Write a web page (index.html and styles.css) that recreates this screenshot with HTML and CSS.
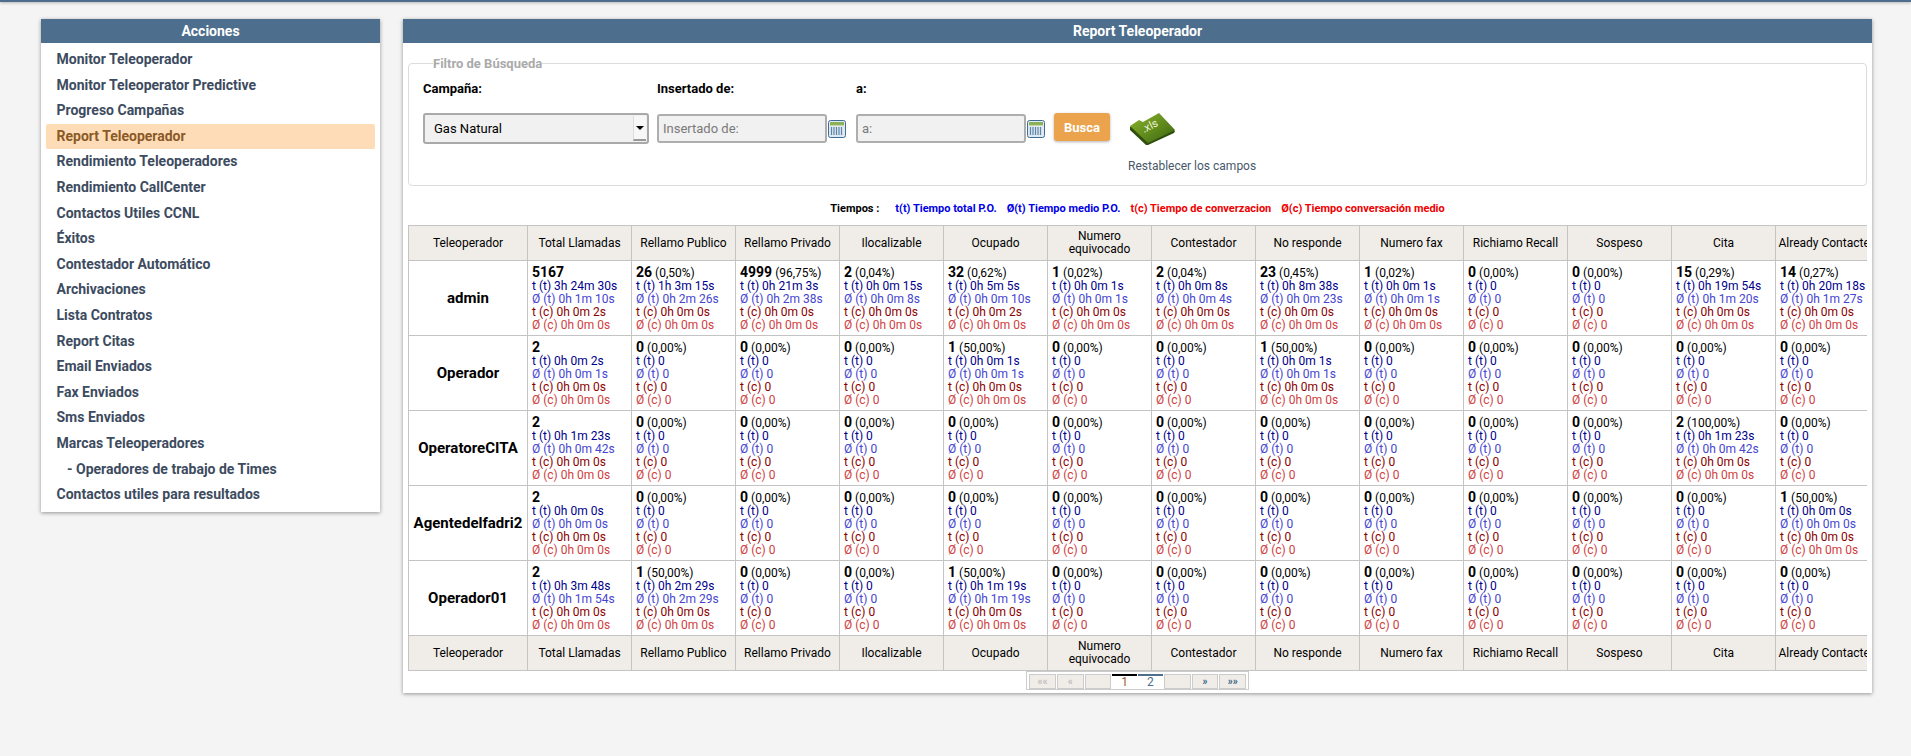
FILE: index.html
```html
<!DOCTYPE html>
<html lang="es">
<head>
<meta charset="utf-8">
<title>Report Teleoperador</title>
<link rel="stylesheet" href="styles.css">
</head>
<body>
<div class="topbar"></div>
<div class="layout">
  <aside class="panel side">
    <h2 class="panel-title">Acciones</h2>
    <ul class="menu">
      <li><a>Monitor Teleoperador</a></li>
      <li><a>Monitor Teleoperator Predictive</a></li>
      <li><a>Progreso Campañas</a></li>
      <li class="active"><a>Report Teleoperador</a></li>
      <li><a>Rendimiento Teleoperadores</a></li>
      <li><a>Rendimiento CallCenter</a></li>
      <li><a>Contactos Utiles CCNL</a></li>
      <li><a>Éxitos</a></li>
      <li><a>Contestador Automático</a></li>
      <li><a>Archivaciones</a></li>
      <li><a>Lista Contratos</a></li>
      <li><a>Report Citas</a></li>
      <li><a>Email Enviados</a></li>
      <li><a>Fax Enviados</a></li>
      <li><a>Sms Enviados</a></li>
      <li><a>Marcas Teleoperadores</a></li>
      <li class="sub"><a>- Operadores de trabajo de Times</a></li>
      <li><a>Contactos utiles para resultados</a></li>
    </ul>
  </aside>
  <main class="panel report">
    <h2 class="panel-title">Report Teleoperador</h2>
    <div class="report-body">
      <fieldset class="filter">
        <legend>Filtro de Búsqueda</legend>
        <div class="filter-grid">
          <label class="flabel">Campaña:</label>
          <label class="flabel">Insertado de:</label>
          <label class="flabel">a:</label>
          <span></span><span></span>
          <div class="select-wrap">
            <select class="campaign"><option>Gas Natural</option></select>
            <span class="select-arrow"></span>
          </div>
          <div class="date-field">
            <input class="date" placeholder="Insertado de:">
            <svg class="cal" viewBox="0 0 18 18"><rect x=".5" y=".5" width="17" height="17" rx="2" fill="#dfe9f2" stroke="#3f6d94"/><rect x="2" y="2" width="14" height="3" fill="#8db05a"/><rect x="2" y="5" width="14" height="1" fill="#c9d9a8"/><path d="M3.5 7v8M6 7v8M8.500 7v8M11 7v8M13.500 7v8" stroke="#5f86a8" stroke-width="1.200"/></svg>
          </div>
          <div class="date-field">
            <input class="date" placeholder="a:">
            <svg class="cal" viewBox="0 0 18 18"><rect x=".5" y=".5" width="17" height="17" rx="2" fill="#dfe9f2" stroke="#3f6d94"/><rect x="2" y="2" width="14" height="3" fill="#8db05a"/><rect x="2" y="5" width="14" height="1" fill="#c9d9a8"/><path d="M3.5 7v8M6 7v8M8.500 7v8M11 7v8M13.500 7v8" stroke="#5f86a8" stroke-width="1.200"/></svg>
          </div>
          <button class="search">Busca</button>
          <svg class="xls" viewBox="0 0 48 34">
            <defs><linearGradient id="xg" x1="0" y1="0" x2="1" y2="1"><stop offset="0" stop-color="#8fb531"/><stop offset=".55" stop-color="#5f8a1c"/><stop offset="1" stop-color="#39600f"/></linearGradient></defs>
            <path d="M2 15 L11 9 L15 11 L31 2 L47 19 L46 21 L20 33 L18 33 L2 18 Z" fill="#2f4f0c"/>
            <path d="M2 14 L11 8 L15 10 L31 1 L47 18 L20 31 Z" fill="url(#xg)"/>
            <text class="xls-text" x="16" y="21" transform="rotate(-27 16 21)">.xls</text>
          </svg>
          <a class="reset">Restablecer los campos</a>
        </div>
      </fieldset>
      <p class="legend-line"><b class="k">Tiempos :</b><b class="bl">t(t) Tiempo total P.O.</b><b class="bl">Ø(t) Tiempo medio P.O.</b><b class="rd">t(c) Tiempo de converzacion</b><b class="rd">Ø(c) Tiempo conversación medio</b></p>
      <div class="table-clip">
        <table class="stats">
          <colgroup><col class="c-name"><col span="13" class="c-num"></colgroup>
          <thead>
            <tr><th>Teleoperador</th><th>Total Llamadas</th><th>Rellamo Publico</th><th>Rellamo Privado</th><th>Ilocalizable</th><th>Ocupado</th><th>Numero equivocado</th><th>Contestador</th><th>No responde</th><th>Numero fax</th><th>Richiamo Recall</th><th>Sospeso</th><th>Cita</th><th>Already Contacted</th></tr>
          </thead>
          <tbody>
            <tr>
              <td class="name">admin</td>
              <td class="total"><b>5167</b><i class="tt">t (t) 3h 24m 30s</i><i class="mt">Ø (t) 0h 1m 10s</i><i class="tc">t (c) 0h 0m 2s</i><i class="mc">Ø (c) 0h 0m 0s</i></td>
              <td><b>26</b> <small>(0,50%)</small><i class="tt">t (t) 1h 3m 15s</i><i class="mt">Ø (t) 0h 2m 26s</i><i class="tc">t (c) 0h 0m 0s</i><i class="mc">Ø (c) 0h 0m 0s</i></td>
              <td><b>4999</b> <small>(96,75%)</small><i class="tt">t (t) 0h 21m 3s</i><i class="mt">Ø (t) 0h 2m 38s</i><i class="tc">t (c) 0h 0m 0s</i><i class="mc">Ø (c) 0h 0m 0s</i></td>
              <td><b>2</b> <small>(0,04%)</small><i class="tt">t (t) 0h 0m 15s</i><i class="mt">Ø (t) 0h 0m 8s</i><i class="tc">t (c) 0h 0m 0s</i><i class="mc">Ø (c) 0h 0m 0s</i></td>
              <td><b>32</b> <small>(0,62%)</small><i class="tt">t (t) 0h 5m 5s</i><i class="mt">Ø (t) 0h 0m 10s</i><i class="tc">t (c) 0h 0m 2s</i><i class="mc">Ø (c) 0h 0m 0s</i></td>
              <td><b>1</b> <small>(0,02%)</small><i class="tt">t (t) 0h 0m 1s</i><i class="mt">Ø (t) 0h 0m 1s</i><i class="tc">t (c) 0h 0m 0s</i><i class="mc">Ø (c) 0h 0m 0s</i></td>
              <td><b>2</b> <small>(0,04%)</small><i class="tt">t (t) 0h 0m 8s</i><i class="mt">Ø (t) 0h 0m 4s</i><i class="tc">t (c) 0h 0m 0s</i><i class="mc">Ø (c) 0h 0m 0s</i></td>
              <td><b>23</b> <small>(0,45%)</small><i class="tt">t (t) 0h 8m 38s</i><i class="mt">Ø (t) 0h 0m 23s</i><i class="tc">t (c) 0h 0m 0s</i><i class="mc">Ø (c) 0h 0m 0s</i></td>
              <td><b>1</b> <small>(0,02%)</small><i class="tt">t (t) 0h 0m 1s</i><i class="mt">Ø (t) 0h 0m 1s</i><i class="tc">t (c) 0h 0m 0s</i><i class="mc">Ø (c) 0h 0m 0s</i></td>
              <td><b>0</b> <small>(0,00%)</small><i class="tt">t (t) 0</i><i class="mt">Ø (t) 0</i><i class="tc">t (c) 0</i><i class="mc">Ø (c) 0</i></td>
              <td><b>0</b> <small>(0,00%)</small><i class="tt">t (t) 0</i><i class="mt">Ø (t) 0</i><i class="tc">t (c) 0</i><i class="mc">Ø (c) 0</i></td>
              <td><b>15</b> <small>(0,29%)</small><i class="tt">t (t) 0h 19m 54s</i><i class="mt">Ø (t) 0h 1m 20s</i><i class="tc">t (c) 0h 0m 0s</i><i class="mc">Ø (c) 0h 0m 0s</i></td>
              <td><b>14</b> <small>(0,27%)</small><i class="tt">t (t) 0h 20m 18s</i><i class="mt">Ø (t) 0h 1m 27s</i><i class="tc">t (c) 0h 0m 0s</i><i class="mc">Ø (c) 0h 0m 0s</i></td>
            </tr>
            <tr>
              <td class="name">Operador</td>
              <td class="total"><b>2</b><i class="tt">t (t) 0h 0m 2s</i><i class="mt">Ø (t) 0h 0m 1s</i><i class="tc">t (c) 0h 0m 0s</i><i class="mc">Ø (c) 0h 0m 0s</i></td>
              <td><b>0</b> <small>(0,00%)</small><i class="tt">t (t) 0</i><i class="mt">Ø (t) 0</i><i class="tc">t (c) 0</i><i class="mc">Ø (c) 0</i></td>
              <td><b>0</b> <small>(0,00%)</small><i class="tt">t (t) 0</i><i class="mt">Ø (t) 0</i><i class="tc">t (c) 0</i><i class="mc">Ø (c) 0</i></td>
              <td><b>0</b> <small>(0,00%)</small><i class="tt">t (t) 0</i><i class="mt">Ø (t) 0</i><i class="tc">t (c) 0</i><i class="mc">Ø (c) 0</i></td>
              <td><b>1</b> <small>(50,00%)</small><i class="tt">t (t) 0h 0m 1s</i><i class="mt">Ø (t) 0h 0m 1s</i><i class="tc">t (c) 0h 0m 0s</i><i class="mc">Ø (c) 0h 0m 0s</i></td>
              <td><b>0</b> <small>(0,00%)</small><i class="tt">t (t) 0</i><i class="mt">Ø (t) 0</i><i class="tc">t (c) 0</i><i class="mc">Ø (c) 0</i></td>
              <td><b>0</b> <small>(0,00%)</small><i class="tt">t (t) 0</i><i class="mt">Ø (t) 0</i><i class="tc">t (c) 0</i><i class="mc">Ø (c) 0</i></td>
              <td><b>1</b> <small>(50,00%)</small><i class="tt">t (t) 0h 0m 1s</i><i class="mt">Ø (t) 0h 0m 1s</i><i class="tc">t (c) 0h 0m 0s</i><i class="mc">Ø (c) 0h 0m 0s</i></td>
              <td><b>0</b> <small>(0,00%)</small><i class="tt">t (t) 0</i><i class="mt">Ø (t) 0</i><i class="tc">t (c) 0</i><i class="mc">Ø (c) 0</i></td>
              <td><b>0</b> <small>(0,00%)</small><i class="tt">t (t) 0</i><i class="mt">Ø (t) 0</i><i class="tc">t (c) 0</i><i class="mc">Ø (c) 0</i></td>
              <td><b>0</b> <small>(0,00%)</small><i class="tt">t (t) 0</i><i class="mt">Ø (t) 0</i><i class="tc">t (c) 0</i><i class="mc">Ø (c) 0</i></td>
              <td><b>0</b> <small>(0,00%)</small><i class="tt">t (t) 0</i><i class="mt">Ø (t) 0</i><i class="tc">t (c) 0</i><i class="mc">Ø (c) 0</i></td>
              <td><b>0</b> <small>(0,00%)</small><i class="tt">t (t) 0</i><i class="mt">Ø (t) 0</i><i class="tc">t (c) 0</i><i class="mc">Ø (c) 0</i></td>
            </tr>
            <tr>
              <td class="name">OperatoreCITA</td>
              <td class="total"><b>2</b><i class="tt">t (t) 0h 1m 23s</i><i class="mt">Ø (t) 0h 0m 42s</i><i class="tc">t (c) 0h 0m 0s</i><i class="mc">Ø (c) 0h 0m 0s</i></td>
              <td><b>0</b> <small>(0,00%)</small><i class="tt">t (t) 0</i><i class="mt">Ø (t) 0</i><i class="tc">t (c) 0</i><i class="mc">Ø (c) 0</i></td>
              <td><b>0</b> <small>(0,00%)</small><i class="tt">t (t) 0</i><i class="mt">Ø (t) 0</i><i class="tc">t (c) 0</i><i class="mc">Ø (c) 0</i></td>
              <td><b>0</b> <small>(0,00%)</small><i class="tt">t (t) 0</i><i class="mt">Ø (t) 0</i><i class="tc">t (c) 0</i><i class="mc">Ø (c) 0</i></td>
              <td><b>0</b> <small>(0,00%)</small><i class="tt">t (t) 0</i><i class="mt">Ø (t) 0</i><i class="tc">t (c) 0</i><i class="mc">Ø (c) 0</i></td>
              <td><b>0</b> <small>(0,00%)</small><i class="tt">t (t) 0</i><i class="mt">Ø (t) 0</i><i class="tc">t (c) 0</i><i class="mc">Ø (c) 0</i></td>
              <td><b>0</b> <small>(0,00%)</small><i class="tt">t (t) 0</i><i class="mt">Ø (t) 0</i><i class="tc">t (c) 0</i><i class="mc">Ø (c) 0</i></td>
              <td><b>0</b> <small>(0,00%)</small><i class="tt">t (t) 0</i><i class="mt">Ø (t) 0</i><i class="tc">t (c) 0</i><i class="mc">Ø (c) 0</i></td>
              <td><b>0</b> <small>(0,00%)</small><i class="tt">t (t) 0</i><i class="mt">Ø (t) 0</i><i class="tc">t (c) 0</i><i class="mc">Ø (c) 0</i></td>
              <td><b>0</b> <small>(0,00%)</small><i class="tt">t (t) 0</i><i class="mt">Ø (t) 0</i><i class="tc">t (c) 0</i><i class="mc">Ø (c) 0</i></td>
              <td><b>0</b> <small>(0,00%)</small><i class="tt">t (t) 0</i><i class="mt">Ø (t) 0</i><i class="tc">t (c) 0</i><i class="mc">Ø (c) 0</i></td>
              <td><b>2</b> <small>(100,00%)</small><i class="tt">t (t) 0h 1m 23s</i><i class="mt">Ø (t) 0h 0m 42s</i><i class="tc">t (c) 0h 0m 0s</i><i class="mc">Ø (c) 0h 0m 0s</i></td>
              <td><b>0</b> <small>(0,00%)</small><i class="tt">t (t) 0</i><i class="mt">Ø (t) 0</i><i class="tc">t (c) 0</i><i class="mc">Ø (c) 0</i></td>
            </tr>
            <tr>
              <td class="name">Agentedelfadri2</td>
              <td class="total"><b>2</b><i class="tt">t (t) 0h 0m 0s</i><i class="mt">Ø (t) 0h 0m 0s</i><i class="tc">t (c) 0h 0m 0s</i><i class="mc">Ø (c) 0h 0m 0s</i></td>
              <td><b>0</b> <small>(0,00%)</small><i class="tt">t (t) 0</i><i class="mt">Ø (t) 0</i><i class="tc">t (c) 0</i><i class="mc">Ø (c) 0</i></td>
              <td><b>0</b> <small>(0,00%)</small><i class="tt">t (t) 0</i><i class="mt">Ø (t) 0</i><i class="tc">t (c) 0</i><i class="mc">Ø (c) 0</i></td>
              <td><b>0</b> <small>(0,00%)</small><i class="tt">t (t) 0</i><i class="mt">Ø (t) 0</i><i class="tc">t (c) 0</i><i class="mc">Ø (c) 0</i></td>
              <td><b>0</b> <small>(0,00%)</small><i class="tt">t (t) 0</i><i class="mt">Ø (t) 0</i><i class="tc">t (c) 0</i><i class="mc">Ø (c) 0</i></td>
              <td><b>0</b> <small>(0,00%)</small><i class="tt">t (t) 0</i><i class="mt">Ø (t) 0</i><i class="tc">t (c) 0</i><i class="mc">Ø (c) 0</i></td>
              <td><b>0</b> <small>(0,00%)</small><i class="tt">t (t) 0</i><i class="mt">Ø (t) 0</i><i class="tc">t (c) 0</i><i class="mc">Ø (c) 0</i></td>
              <td><b>0</b> <small>(0,00%)</small><i class="tt">t (t) 0</i><i class="mt">Ø (t) 0</i><i class="tc">t (c) 0</i><i class="mc">Ø (c) 0</i></td>
              <td><b>0</b> <small>(0,00%)</small><i class="tt">t (t) 0</i><i class="mt">Ø (t) 0</i><i class="tc">t (c) 0</i><i class="mc">Ø (c) 0</i></td>
              <td><b>0</b> <small>(0,00%)</small><i class="tt">t (t) 0</i><i class="mt">Ø (t) 0</i><i class="tc">t (c) 0</i><i class="mc">Ø (c) 0</i></td>
              <td><b>0</b> <small>(0,00%)</small><i class="tt">t (t) 0</i><i class="mt">Ø (t) 0</i><i class="tc">t (c) 0</i><i class="mc">Ø (c) 0</i></td>
              <td><b>0</b> <small>(0,00%)</small><i class="tt">t (t) 0</i><i class="mt">Ø (t) 0</i><i class="tc">t (c) 0</i><i class="mc">Ø (c) 0</i></td>
              <td><b>1</b> <small>(50,00%)</small><i class="tt">t (t) 0h 0m 0s</i><i class="mt">Ø (t) 0h 0m 0s</i><i class="tc">t (c) 0h 0m 0s</i><i class="mc">Ø (c) 0h 0m 0s</i></td>
            </tr>
            <tr>
              <td class="name">Operador01</td>
              <td class="total"><b>2</b><i class="tt">t (t) 0h 3m 48s</i><i class="mt">Ø (t) 0h 1m 54s</i><i class="tc">t (c) 0h 0m 0s</i><i class="mc">Ø (c) 0h 0m 0s</i></td>
              <td><b>1</b> <small>(50,00%)</small><i class="tt">t (t) 0h 2m 29s</i><i class="mt">Ø (t) 0h 2m 29s</i><i class="tc">t (c) 0h 0m 0s</i><i class="mc">Ø (c) 0h 0m 0s</i></td>
              <td><b>0</b> <small>(0,00%)</small><i class="tt">t (t) 0</i><i class="mt">Ø (t) 0</i><i class="tc">t (c) 0</i><i class="mc">Ø (c) 0</i></td>
              <td><b>0</b> <small>(0,00%)</small><i class="tt">t (t) 0</i><i class="mt">Ø (t) 0</i><i class="tc">t (c) 0</i><i class="mc">Ø (c) 0</i></td>
              <td><b>1</b> <small>(50,00%)</small><i class="tt">t (t) 0h 1m 19s</i><i class="mt">Ø (t) 0h 1m 19s</i><i class="tc">t (c) 0h 0m 0s</i><i class="mc">Ø (c) 0h 0m 0s</i></td>
              <td><b>0</b> <small>(0,00%)</small><i class="tt">t (t) 0</i><i class="mt">Ø (t) 0</i><i class="tc">t (c) 0</i><i class="mc">Ø (c) 0</i></td>
              <td><b>0</b> <small>(0,00%)</small><i class="tt">t (t) 0</i><i class="mt">Ø (t) 0</i><i class="tc">t (c) 0</i><i class="mc">Ø (c) 0</i></td>
              <td><b>0</b> <small>(0,00%)</small><i class="tt">t (t) 0</i><i class="mt">Ø (t) 0</i><i class="tc">t (c) 0</i><i class="mc">Ø (c) 0</i></td>
              <td><b>0</b> <small>(0,00%)</small><i class="tt">t (t) 0</i><i class="mt">Ø (t) 0</i><i class="tc">t (c) 0</i><i class="mc">Ø (c) 0</i></td>
              <td><b>0</b> <small>(0,00%)</small><i class="tt">t (t) 0</i><i class="mt">Ø (t) 0</i><i class="tc">t (c) 0</i><i class="mc">Ø (c) 0</i></td>
              <td><b>0</b> <small>(0,00%)</small><i class="tt">t (t) 0</i><i class="mt">Ø (t) 0</i><i class="tc">t (c) 0</i><i class="mc">Ø (c) 0</i></td>
              <td><b>0</b> <small>(0,00%)</small><i class="tt">t (t) 0</i><i class="mt">Ø (t) 0</i><i class="tc">t (c) 0</i><i class="mc">Ø (c) 0</i></td>
              <td><b>0</b> <small>(0,00%)</small><i class="tt">t (t) 0</i><i class="mt">Ø (t) 0</i><i class="tc">t (c) 0</i><i class="mc">Ø (c) 0</i></td>
            </tr>
          </tbody>
          <tfoot>
            <tr><th>Teleoperador</th><th>Total Llamadas</th><th>Rellamo Publico</th><th>Rellamo Privado</th><th>Ilocalizable</th><th>Ocupado</th><th>Numero equivocado</th><th>Contestador</th><th>No responde</th><th>Numero fax</th><th>Richiamo Recall</th><th>Sospeso</th><th>Cita</th><th>Already Contacted</th></tr>
          </tfoot>
        </table>
      </div>
      <nav class="pager">
        <a class="pg off">««</a><a class="pg off">«</a><a class="pg blank"></a><a class="num cur">1</a><a class="num">2</a><a class="pg blank"></a><a class="pg">»</a><a class="pg">»»</a>
      </nav>
    </div>
  </main>
</div>
</body>
</html>
```

FILE: styles.css
```css
* { box-sizing: border-box; }
html, body { margin: 0; height: 100%; }
body {
  background: #f4f4f4;
  font-family: Roboto, "Liberation Sans", sans-serif;
  color: #000;
  overflow: hidden;
}
.topbar {
  height: 2px;
  background: #4d6d8c;
  box-shadow: 0 1px 3px rgba(0, 0, 0, .3);
}
.layout {
  display: flex;
  align-items: flex-start;
  gap: 23px;
  padding: 17px 0 0 41px;
}
.panel {
  background: #fff;
  box-shadow: 0 1px 4px rgba(0, 0, 0, .4);
}
.panel-title {
  margin: 0;
  height: 24px;
  background: #4d6e8c;
  color: #fff;
  font-size: 14px;
  font-weight: 700;
  line-height: 24px;
  text-align: center;
}
.side { width: 339px; }
.menu {
  list-style: none;
  margin: 0;
  padding: 4px 5px;
}
.menu li {
  height: 25.6px;
  line-height: 25.6px;
  padding-left: 10.5px;
  font-size: 14px;
  font-weight: 700;
  color: #3d4b60;
  border-radius: 2px;
}
.menu li.sub { padding-left: 21px; }
.menu li.active {
  background: #ffdcb8;
  color: #8a5a26;
}
.report { width: 1469px; height: 674px; }
.report-body { padding: 0 5px; }

.filter {
  margin: 13px 0 0;
  padding: 10px 14px 0;
  height: 130px;
  width: 1459px;
  border: 1px solid #dcdcdc;
  border-radius: 4px;
}
.filter legend {
  margin-left: 10px;
  padding: 0;
  font-size: 13px;
  font-weight: 700;
  line-height: 15px;
  color: #aaa;
}
.filter-grid {
  display: grid;
  grid-template-columns: 234px 199px 198px 74px auto;
  grid-template-rows: 16px 31px 35px;
  row-gap: 16px;
  justify-content: start;
  align-items: start;
}
.flabel {
  font-size: 13px;
  font-weight: 700;
  line-height: 16px;
}
.select-wrap {
  position: relative;
  width: 226px;
  height: 31px;
}
.campaign {
  appearance: none;
  width: 100%;
  height: 100%;
  padding: 0 0 0 9px;
  border: 2px solid #a9a9a9;
  border-radius: 3px;
  background: #f1f1f1;
  font: 13px Roboto, sans-serif;
  color: #000;
}
.select-arrow {
  position: absolute;
  top: 3px;
  right: 3px;
  width: 13px;
  height: 25px;
  background: #f7f7f7 linear-gradient(#000, #000) no-repeat -20px 0;
  border-left: 1px solid #ddd;
  border-bottom: 2px solid #999;
}
.select-arrow::after {
  content: "";
  position: absolute;
  top: 10px;
  left: 2px;
  border: 4px solid transparent;
  border-top: 4px solid #000;
  border-bottom: 0;
}
.date-field {
  display: flex;
  align-items: center;
  gap: 1px;
  height: 31px;
}
.date {
  width: 170px;
  height: 29px;
  padding: 0 4px;
  border: 2px solid #aeaeae;
  border-radius: 3px;
  background: #f1f1f1;
  font: 13px Roboto, sans-serif;
}
.date::placeholder { color: #7a7a7a; opacity: 1; }
.cal { width: 18px; height: 18px; flex: none; }
.search {
  width: 56px;
  height: 28px;
  padding: 0;
  border: 0;
  border-radius: 3px;
  background: #eca34d;
  box-shadow: 0 1px 3px rgba(0, 0, 0, .3);
  color: #fff;
  font: 700 13px Roboto, sans-serif;
}
.xls { width: 48px; height: 34px; margin-top: -1px; }
.xls-text {
  font: 11px Roboto, sans-serif;
  fill: #eef5da;
}
.reset {
  grid-column: 5;
  grid-row: 3;
  font-size: 12px;
  line-height: 15px;
  white-space: nowrap;
  color: #48586a;
  margin-top: -1px;
}
.legend-line {
  display: flex;
  justify-content: center;
  margin: 15px 0 0;
  height: 15px;
  font-size: 11px;
  line-height: 15px;
  white-space: nowrap;
}
.legend-line b { margin-left: 10px; }
.legend-line .k { margin-left: 0; margin-right: 6px; }
.bl { color: #0000e6; }
.rd { color: #f00000; }

.table-clip {
  margin-top: 9px;
  width: 1459px;
  overflow: hidden;
}
.stats {
  width: 1471px;
  table-layout: fixed;
  border-collapse: collapse;
  font-size: 12px;
  line-height: 13px;
}
.c-name { width: 119px; }
.c-num { width: 104px; }
.stats th {
  height: 35px;
  padding: 0 2px;
  border: 1px solid #c4c4c4;
  background: #f0ede8;
  font-weight: 400;
  white-space: nowrap;
  overflow: hidden;
}
.stats th:nth-child(7) { white-space: normal; }
.stats td {
  height: 75px;
  padding: 0 4px;
  border: 1px solid #c4c4c4;
  vertical-align: middle;
  white-space: nowrap;
  overflow: hidden;
}
.stats td.name {
  padding: 0;
  text-align: center;
  font-size: 15px;
  font-weight: 700;
}
.stats td b { font-size: 14px; font-weight: 700; line-height: 15px; }
.stats td small { font-size: 12px; }
.stats td i { display: block; font-style: normal; }
.tt { color: #00008b; }
.mt { color: #4545d0; }
.tc { color: #8b0000; }
.mc { color: #d04040; }

.pager {
  display: flex;
  justify-content: center;
  width: 223px;
  height: 19px;
  margin: 0 auto;
  padding: 2px;
  gap: 1px;
  border: 1px solid #ccc;
  border-top: 1px solid #ccc;
  font-size: 10px;
  line-height: 13px;
  text-align: center;
}
.pg {
  width: 27px;
  height: 15px;
  border: 1px solid #ccc;
  background: #f0ede8;
  font-weight: 700;
  color: #2f5a85;
}
.pg.off { color: #bbb; }
.num {
  width: 25px;
  height: 15px;
  border-top: 2px solid #4d6e8c;
  font-size: 12px;
  line-height: 13px;
  color: #4d6e8c;
}
.num.cur { border-top-color: #000; color: #9a5a1e; }
```
